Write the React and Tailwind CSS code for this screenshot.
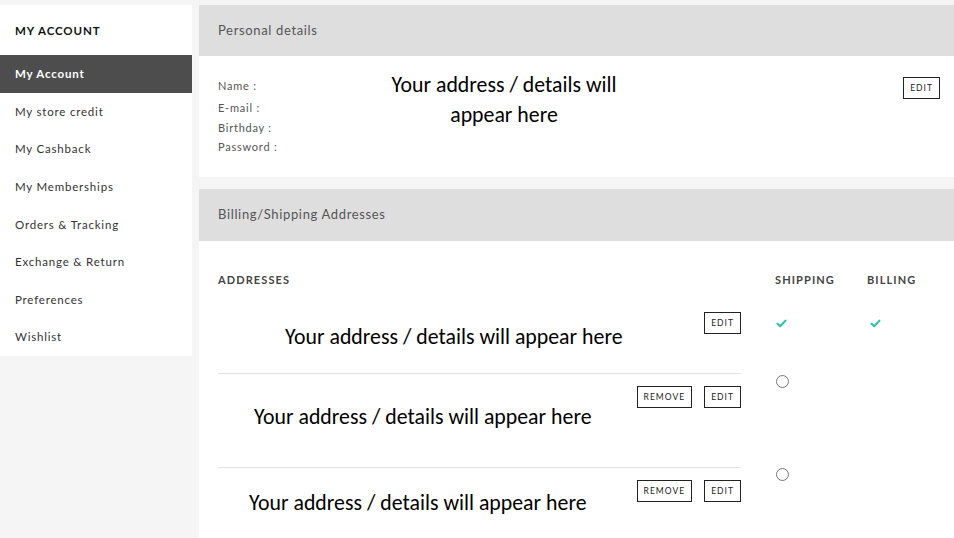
const menu = [
  "My Account",
  "My store credit",
  "My Cashback",
  "My Memberships",
  "Orders & Tracking",
  "Exchange & Return",
  "Preferences",
  "Wishlist",
];

const uiFont = { fontFamily: "Lato, 'Open Sans', sans-serif" };
const copyFont = { fontFamily: "Carlito, Lato, 'Open Sans', sans-serif" };

function SmallButton({ children }) {
  return (
    <button className="flex items-center h-[22px] px-[6px] border border-[#222] bg-white text-[8.5px] tracking-[0.12em] text-[#222] leading-none">
      {children}
    </button>
  );
}

function Check() {
  return (
    <svg width="11" height="9" viewBox="0 0 11 9">
      <path d="M1.5 4.8 L4.2 7.3 L9.5 1.6" fill="none" stroke="#28c4a4" strokeWidth="2" strokeLinecap="round" strokeLinejoin="round" />
    </svg>
  );
}

function Circle() {
  return <div className="w-[13px] h-[13px] rounded-full border border-[#777]" />;
}

function AddressRow({ textPad, textTop, btnTop, remove, divider, height, shipping, billing, shipTop }) {
  return (
    <div className="flex" style={{ height }}>
      <div className={`w-[523px] flex justify-between ${divider ? "border-b border-[#e2e2e2]" : ""}`}>
        <div style={{ paddingLeft: textPad, paddingTop: textTop, ...copyFont }} className="text-[21.8px] leading-[28px] text-black whitespace-nowrap">
          Your address / details will appear here
        </div>
        <div className="flex items-start gap-[12px]" style={{ marginTop: btnTop }}>
          {remove && <SmallButton>REMOVE</SmallButton>}
          <SmallButton>EDIT</SmallButton>
        </div>
      </div>
      <div className="w-[34px]" />
      <div className="w-[92px] flex items-start pl-[1px]" style={{ paddingTop: shipTop }}>
        {shipping}
      </div>
      <div className="flex items-start pl-[3px]" style={{ paddingTop: shipTop }}>
        {billing}
      </div>
    </div>
  );
}

export default function App() {
  return (
    <div className="w-[954px] h-[538px] bg-[#f5f5f5] flex gap-[7px] pt-[5px] overflow-hidden" style={uiFont}>
      {/* SIDEBAR */}
      <div className="w-[192px] self-start bg-white">
        <div className="h-[50px] flex items-center pl-[15px] pt-[1px] text-[11.5px] font-bold tracking-[0.08em] text-[#111]">
          MY ACCOUNT
        </div>
        {menu.map((m, i) => (
          <div
            key={m}
            className={`h-[37.6px] flex items-center pl-[15px] text-[11.5px] tracking-[0.07em] ${
              i === 0 ? "bg-[#4d4d4d] text-white font-bold" : "text-[#333]"
            }`}
          >
            {m}
          </div>
        ))}
      </div>

      {/* MAIN */}
      <div className="flex-1 flex flex-col gap-[12px]">
        {/* personal details */}
        <div>
          <div className="h-[51px] bg-[#dedede] flex items-center pl-[19px] text-[13px] tracking-[0.05em] text-[#555]">
            Personal details
          </div>
          <div className="h-[121px] bg-white flex items-start pl-[19px] pt-[21px] pr-[14px]">
            <div className="w-[160px] text-[11px] tracking-[0.07em] text-[#555] flex flex-col">
              <span className="leading-[18px]">Name :</span>
              <span className="leading-[18px] mt-[4px]">E-mail :</span>
              <span className="leading-[18px] mt-[2px]">Birthday :</span>
              <span className="leading-[18px] mt-[1px]">Password :</span>
            </div>
            <div className="w-[252px] text-center text-[21.8px] leading-[30px] text-black -mt-[7px] whitespace-nowrap" style={copyFont}>
              Your address / details will
              <br />
              appear here
            </div>
            <div className="flex-1 flex justify-end">
              <SmallButton>EDIT</SmallButton>
            </div>
          </div>
        </div>

        {/* billing / shipping */}
        <div className="flex-1 flex flex-col">
          <div className="h-[52px] bg-[#dedede] flex items-center pl-[19px] text-[13px] tracking-[0.05em] text-[#555]">
            Billing/Shipping Addresses
          </div>
          <div className="flex-1 bg-white pl-[19px]">
            <div className="flex pt-[31px] h-[64px] text-[11px] font-bold tracking-[0.1em] text-[#444] leading-[16px]">
              <div className="w-[557px]">ADDRESSES</div>
              <div className="w-[92px]">SHIPPING</div>
              <div>BILLING</div>
            </div>
            <AddressRow
              height={69}
              textPad={67}
              textTop={18}
              btnTop={7}
              divider
              shipTop={14}
              shipping={<Check />}
              billing={<Check />}
            />
            <AddressRow
              height={94}
              textPad={36}
              textTop={29}
              btnTop={12}
              remove
              divider
              shipTop={1}
              shipping={<Circle />}
            />
            <AddressRow
              height={80}
              textPad={31}
              textTop={21}
              btnTop={12}
              remove
              shipTop={0}
              shipping={<Circle />}
            />
          </div>
        </div>
      </div>
    </div>
  );
}
